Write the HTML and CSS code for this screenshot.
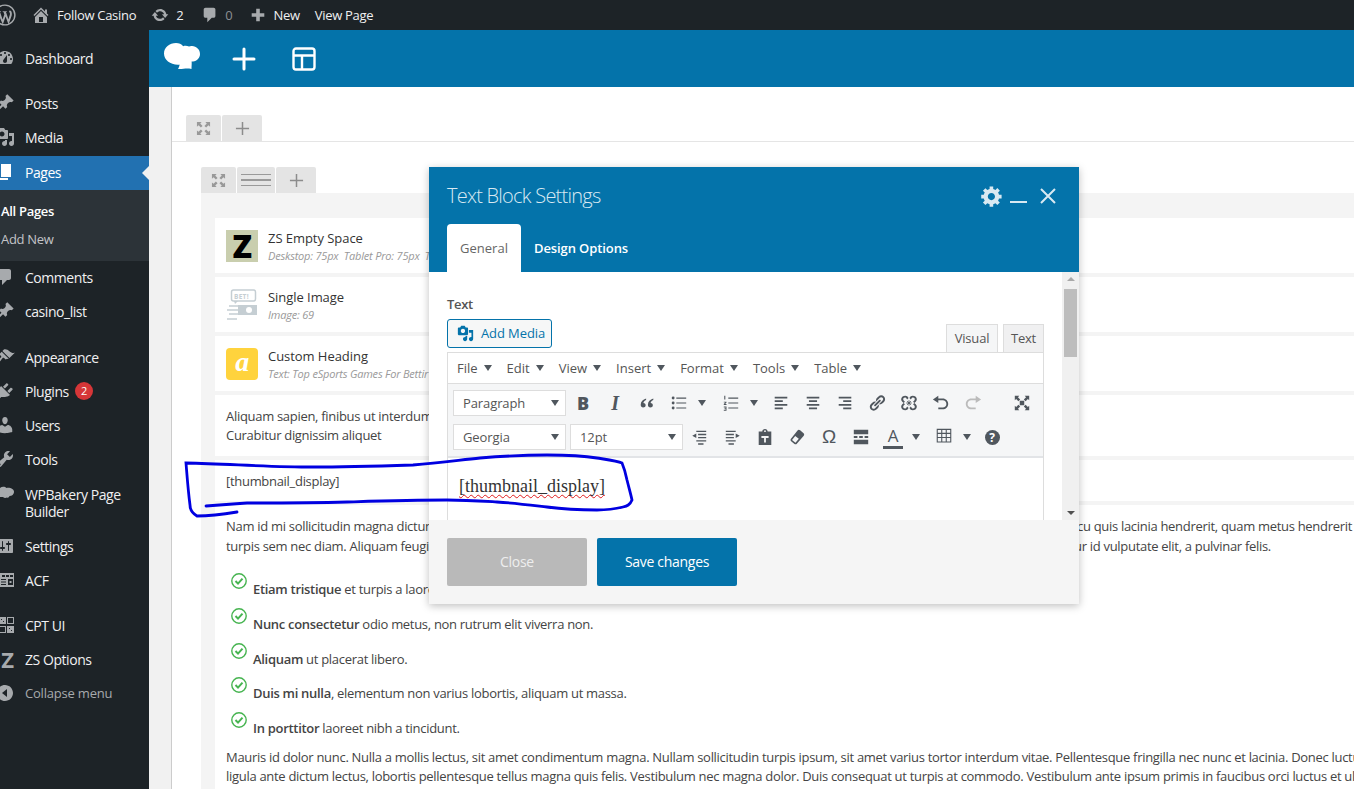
FILE: index.html
```html
<!DOCTYPE html>
<html>
<head>
  <title>Edit Page - Follow Casino</title>
  <link rel="stylesheet" href="styles.css">
</head>
<body>
  <!-- admin bar -->
  <div class="adminbar">
    <svg class="ab-wp" viewBox="0 0 20 20"><circle cx="10" cy="10" r="9" fill="none" stroke="#a7aaad" stroke-width="1.3"/><path d="M2.800 6.500h3.600v.6l-.9.2 2.300 6.700 1.600-4.500-.8-2.200-.8-.2v-.6h4v.6l-.9.2 2.200 6.500 1.300-4c.4-1.400-.2-2-.6-2.800-.2-.6.2-1.200.9-1.200l1 .9c.8 1.700.6 3.300 0 5l-2.500 7-2.700-7.400-2.500 7.400z" fill="#a7aaad"/></svg>
    <svg class="ab-icon home" viewBox="0 0 20 20"><path d="M16 8.5l1.53 1.53-1.06 1.06L10 4.62l-6.47 6.47-1.06-1.06L10 2.5l4 4v-2h2v4zm-6-2.46l6 5.99V18H4v-5.97zM12 17v-5H8v5h4z"/></svg>
    <span class="ab-text site">Follow Casino</span>
    <svg class="ab-icon updates" viewBox="0 0 20 20"><path d="M10.2 3.28c3.53 0 6.43 2.61 6.92 6h2.08l-3.5 4-3.5-4h2.32c-.45-1.97-2.21-3.45-4.32-3.45-1.45 0-2.73.71-3.54 1.78L4.95 5.66C6.23 4.2 8.11 3.28 10.2 3.28zm-.4 13.44c-3.52 0-6.43-2.61-6.92-6H.8l3.5-4c1.17 1.33 2.33 2.67 3.5 4H5.48c.45 1.97 2.21 3.45 4.32 3.45 1.45 0 2.73-.71 3.54-1.78l1.71 1.95c-1.28 1.46-3.15 2.38-5.25 2.38z"/></svg>
    <span class="ab-text count">2</span>
    <svg class="ab-icon bubble" viewBox="0 0 20 20"><path d="M5 2h9c1.1 0 2 .9 2 2v7c0 1.1-.9 2-2 2h-2l-5 5v-5H5c-1.1 0-2-.9-2-2V4c0-1.1.9-2 2-2z"/></svg>
    <span class="ab-text zero">0</span>
    <svg class="ab-icon plus" viewBox="0 0 20 20"><path d="M8 3h4v5h5v4h-5v5H8v-5H3V8h5z"/></svg>
    <span class="ab-text new">New</span>
    <span class="ab-text view">View Page</span>
  </div>

  <div class="layout">
    <!-- left menu -->
    <nav class="sidebar">
      <a class="item first"><svg viewBox="0 0 20 20"><path d="M3.76 16h12.48c1.1-1.37 1.76-3.11 1.76-5 0-4.42-3.58-8-8-8s-8 3.58-8 8c0 1.89.66 3.63 1.76 5zM10 4c.55 0 1 .45 1 1s-.45 1-1 1-1-.45-1-1 .45-1 1-1zM6 6c.55 0 1 .45 1 1s-.45 1-1 1-1-.45-1-1 .45-1 1-1zm8 0c.55 0 1 .45 1 1s-.45 1-1 1-1-.45-1-1 .45-1 1-1zm-5.37 5.55L12 7v6c0 1.1-.9 2-2 2s-2-.9-2-2c0-.57.24-1.08.63-1.45zM4 10c.55 0 1 .45 1 1s-.45 1-1 1-1-.45-1-1 .45-1 1-1zm12 0c.55 0 1 .45 1 1s-.45 1-1 1-1-.45-1-1 .45-1 1-1z"/></svg>Dashboard</a>
      <a class="item sep"><svg viewBox="0 0 20 20"><path d="M10.44 3.02l1.82-1.82 6.36 6.35-1.83 1.82c-1.05-.68-2.48-.57-3.41.36l-.75.75c-.92.93-1.04 2.35-.35 3.41l-1.83 1.82-2.41-2.41-2.8 2.79c-.42.42-3.38 2.71-3.8 2.29s1.86-3.39 2.28-3.81l2.79-2.79L4.1 9.36l1.83-1.82c1.05.69 2.48.57 3.4-.36l.75-.75c.93-.92 1.05-2.35.36-3.41z"/></svg>Posts</a>
      <a class="item"><svg viewBox="0 0 20 20"><path d="M13 11V4c0-.55-.45-1-1-1h-1.67L9 1H5L3.67 3H2c-.55 0-1 .45-1 1v7c0 .55.45 1 1 1h10c.55 0 1-.45 1-1zM7 4.5c1.38 0 2.5 1.12 2.5 2.5S8.38 9.5 7 9.5 4.5 8.38 4.5 7 5.62 4.5 7 4.5zM14 6h5v10.5c0 1.38-1.12 2.5-2.5 2.5S14 17.88 14 16.5s1.12-2.5 2.5-2.5c.17 0 .34.02.5.05V9h-3V6zm-4 8.05V13h2v3.5c0 1.38-1.12 2.5-2.5 2.5S7 17.88 7 16.5 8.12 14 9.5 14c.17 0 .34.02.5.05z"/></svg>Media</a>
      <a class="item current"><svg viewBox="0 0 20 20"><path d="M6 15V2h10v13H6zm-1 1h8v2H3V5h2v11z"/></svg>Pages</a>
      <div class="submenu">
        <a class="sub-on">All Pages</a>
        <a>Add New</a>
      </div>
      <a class="item"><svg viewBox="0 0 20 20"><path d="M5 2h9c1.1 0 2 .9 2 2v7c0 1.1-.9 2-2 2h-2l-5 5v-5H5c-1.1 0-2-.9-2-2V4c0-1.1.9-2 2-2z"/></svg>Comments</a>
      <a class="item"><svg viewBox="0 0 20 20"><path d="M10.44 3.02l1.82-1.82 6.36 6.35-1.83 1.82c-1.05-.68-2.48-.57-3.41.36l-.75.75c-.92.93-1.04 2.35-.35 3.41l-1.83 1.82-2.41-2.41-2.8 2.79c-.42.42-3.38 2.71-3.8 2.29s1.86-3.39 2.28-3.81l2.79-2.79L4.1 9.36l1.83-1.82c1.05.69 2.48.57 3.4-.36l.75-.75c.93-.92 1.05-2.35.36-3.41z"/></svg>casino_list</a>
      <a class="item sep2"><svg viewBox="0 0 20 20"><path d="M14.48 11.06L7.41 3.99l1.5-1.5c.5-.56 2.3-.47 3.51.32 1.21.8 1.43 1.28 2.91 2.1 1.18.64 2.45 1.26 4.45.85zm-.71.71L6.7 4.7 4.93 6.47c-.39.39-.39 1.02 0 1.41l1.06 1.06c.39.39.39 1.03 0 1.42-.6.6-1.43 1.11-2.21 1.69-.35.26-.7.53-1.01.84C1.43 13.23.4 14.68 1.37 15.65c.97.97 2.42-.06 3.76-1.4.31-.31.58-.66.84-1.01.58-.78 1.09-1.61 1.69-2.21.39-.39 1.03-.39 1.42 0l1.06 1.06c.39.39 1.02.39 1.41 0z"/></svg>Appearance</a>
      <a class="item"><svg viewBox="0 0 20 20"><path d="M13.11 4.36L9.87 7.6 8 5.73l3.24-3.24c.35-.34 1.05-.2 1.56.32.52.51.66 1.21.31 1.55zm-8 1.77l.91-1.12 9.01 9.01-1.19.84c-.71.71-2.63 1.16-3.82 1.16H6.14L4.9 17.26c-.59.59-1.54.59-2.12 0-.59-.58-.59-1.53 0-2.12l1.24-1.24v-3.88c0-1.13.4-3.19 1.09-3.89zm7.26 3.97l3.24-3.24c.34-.35 1.04-.21 1.55.31.52.51.66 1.21.31 1.55l-3.24 3.25z"/></svg>Plugins<span class="badge">2</span></a>
      <a class="item"><svg viewBox="0 0 20 20"><path d="M10 9.25c-2.27 0-2.73-3.44-2.73-3.44C7 4.02 7.82 2 9.97 2c2.16 0 2.98 2.02 2.71 3.81 0 0-.41 3.44-2.68 3.44zm0 2.57L12.72 10c2.39 0 4.52 2.33 4.52 4.53v2.49s-3.65 1.13-7.24 1.13c-3.65 0-7.24-1.13-7.24-1.13v-2.49c0-2.25 1.94-4.48 4.47-4.48z"/></svg>Users</a>
      <a class="item"><svg viewBox="0 0 20 20"><path d="M16.68 9.77c-1.34 1.34-3.3 1.67-4.95.99l-5.41 6.52c-.99.99-2.59.99-3.58 0s-.99-2.59 0-3.57l6.52-5.42c-.68-1.65-.35-3.61.99-4.95 1.28-1.28 3.12-1.62 4.72-1.06l-2.89 2.89 2.82 2.82 2.86-2.87c.53 1.58.18 3.39-1.08 4.65zM3.81 16.21c.4.39 1.04.39 1.43 0 .4-.4.4-1.04 0-1.43-.39-.4-1.03-.4-1.43 0-.39.39-.39 1.03 0 1.43z"/></svg>Tools</a>
      <a class="item tall"><svg viewBox="0 0 20 20"><path d="M5 4c2-1.6 5-1.4 6.5 0 2.5-.8 7 .2 7.5 3.5.3 2.5-2 4.5-4.5 4.5-.5 1.5-1.5 2-2.5 1.5-1.5.7-3 .5-4-.5C4 13.5 1 11.500 1 8.500 1 6.500 3 4.500 5 4z"/></svg><span>WPBakery Page Builder</span></a>
      <a class="item"><svg viewBox="0 0 20 20"><path d="M18 16V4c0-.55-.45-1-1-1H3c-.55 0-1 .45-1 1v12c0 .55.45 1 1 1h14c.55 0 1-.45 1-1zM8 11h1c.55 0 1 .45 1 1s-.45 1-1 1H8v1.5c0 .28-.22.5-.5.5s-.5-.22-.5-.5V13H6c-.55 0-1-.45-1-1s.45-1 1-1h1V5.5c0-.28.22-.5.5-.5s.5.22.5.5V11zm5-2h-1c-.55 0-1-.45-1-1s.45-1 1-1h1V5.5c0-.28.22-.5.5-.5s.5.22.5.5V7h1c.55 0 1 .45 1 1s-.45 1-1 1h-1v5.5c0 .28-.22.5-.5.5s-.5-.22-.5-.5V9z"/></svg>Settings</a>
      <a class="item"><svg viewBox="0 0 20 20"><path fill-rule="evenodd" d="M2 3h17v14H2zM7 5v2h3V5zm4 0v2h3V5zm4 0v2h3V5zM6 9v1h5V9zm0 2.5v1h5v-1zM6 14v1h5v-1zm7-5v6h5V9zm1.5 2h2v2h-2z"/></svg>ACF</a>
      <a class="item sep"><svg viewBox="0 0 20 20"><path fill-rule="evenodd" d="M4 2h7v7H4zm2 2v1h1V4zm2 2v1h1V6zM12 2h7v7h-7zm1 1v5h5V3zM4 11h7v7H4zm1 1v5h5v-5zM12 11h7v7h-7zm2 2v1h1v-1zm2 2v1h1v-1z"/></svg>CPT UI</a>
      <a class="item"><span class="zs-mark">Z</span>ZS Options</a>
      <a class="item collapse"><svg viewBox="0 0 20 20"><path d="M10 2c4.42 0 8 3.58 8 8s-3.58 8-8 8-8-3.58-8-8 3.58-8 8-8zm2 12V6l-5 4z"/></svg>Collapse menu</a>
    </nav>

    <main class="main">
      <div class="builder-bar">
        <svg class="bb-logo" viewBox="0 0 36 27"><path d="M12 0c3 0 5.5 1.2 7.2 3.2C21 2.500 23 2.600 25 3.600c.8-.6 1.800-.7 3-.6 4.500.3 8 3.400 8 8 0 4-3 7-7 7.500-.5 0-1-.1-1.400-.1.3 1.800-.1 5.300-.1 7.600-3-.6-5-.6-8-.2-2 .3-4.500.4-5.500.2.800-1.300 1.500-3 1.500-4.500-.3 0-.7.300-1.500.300C6 21.500 0 17 0 10.500 0 4.500 5.500 0 12 0z"/></svg>
        <svg class="bb-icon" viewBox="0 0 24 24"><path d="M12 2v20M2 12h20" fill="none" stroke="#fff" stroke-width="3" stroke-linecap="round"/></svg>
        <svg class="bb-icon" viewBox="0 0 24 24"><path d="M4 1.5h16A2.500 2.500 0 0 1 22.500 4v16a2.500 2.500 0 0 1-2.500 2.500H4A2.500 2.500 0 0 1 1.500 20V4A2.500 2.500 0 0 1 4 1.500zM2 8.500h20M10 8.500V22" fill="none" stroke="#fff" stroke-width="2.4"/></svg>
      </div>
      <div class="content">
        <div class="gutter"></div>
        <div class="canvas">
          <div class="controls row-controls">
            <span class="ctl wide"><svg viewBox="0 0 16 16"><path d="M1 1h5L4.5 2.700 7 5.200 5.200 7 2.700 4.500 1 6zM15 1v5l-1.700-1.500L10.800 7 9 5.200l2.500-2.500L10 1zM1 15v-5l1.700 1.500L5.200 9 7 10.800l-2.500 2.500L6 15zM15 15h-5l1.500-1.700L9 10.800 10.800 9l2.500 2.500L15 10z"/></svg></span>
            <span class="ctl plus"><svg viewBox="0 0 16 16"><path d="M8 1v14M1 8h14" stroke="#8c8c8c" stroke-width="1.6" fill="none"/></svg></span>
          </div>
          <div class="column">
            <div class="controls col-controls">
              <span class="ctl wide"><svg viewBox="0 0 16 16"><path d="M1 1h5L4.5 2.700 7 5.200 5.200 7 2.700 4.500 1 6zM15 1v5l-1.700-1.500L10.800 7 9 5.200l2.500-2.500L10 1zM1 15v-5l1.700 1.500L5.200 9 7 10.800l-2.500 2.500L6 15zM15 15h-5l1.500-1.700L9 10.800 10.800 9l2.500 2.500L15 10z"/></svg></span>
              <span class="ctl lines"><i></i><i></i><i></i></span>
              <span class="ctl plus"><svg viewBox="0 0 16 16"><path d="M8 1v14M1 8h14" stroke="#8c8c8c" stroke-width="1.6" fill="none"/></svg></span>
            </div>
            <div class="band">
              <div class="card element">
                <span class="el-icon zs">Z</span>
                <div><div class="el-title">ZS Empty Space</div><div class="el-sub">Deskstop: 75px&nbsp; Tablet Pro: 75px&nbsp; T</div></div>
              </div>
              <div class="card element">
                <svg class="el-icon" viewBox="0 0 32 32"><rect x="5.5" y="1" width="24" height="11" rx="2" fill="none" stroke="#c5ced3" stroke-width="1.5"/><text x="8" y="10" class="bet">BET!</text><path d="M8 12l1 3 3-3z" fill="#c5ced3"/><path d="M3 17h10M1 21h11M3 25h9M1 30h10" stroke="#c5ced3" stroke-width="1.5"/><path d="M12 16h19v10H12z" fill="#c5ced3"/><circle cx="23" cy="21" r="3" fill="#fff"/></svg>
                <div><div class="el-title">Single Image</div><div class="el-sub">Image: 69</div></div>
              </div>
              <div class="card element">
                <span class="el-icon heading">a</span>
                <div><div class="el-title">Custom Heading</div><div class="el-sub">Text: Top eSports Games For Bettir</div></div>
              </div>
              <div class="card text-card aliquam">
                <p>Aliquam sapien, finibus ut interdum<br>Curabitur dignissim aliquet</p>
              </div>
              <div class="card text-card shortcode">
                <p>[thumbnail_display]</p>
              </div>
              <div class="card text-card body-text">
                <p class="spread"><span>Nam id mi sollicitudin magna dictum</span><span>arcu quis lacinia hendrerit, quam metus hendrerit</span></p>
                <p class="spread short"><span>turpis sem nec diam. Aliquam feugiat</span><span>ur id vulputate elit, a pulvinar felis.</span></p>
                <ul class="checks">
                  <li><svg viewBox="0 0 16 16"><circle cx="8" cy="8" r="7.2"/><path d="M4.5 8l2.5 2.600 4.500-5"/></svg><span><b>Etiam tristique</b> et turpis a laoreet.</span></li>
                  <li><svg viewBox="0 0 16 16"><circle cx="8" cy="8" r="7.2"/><path d="M4.5 8l2.5 2.600 4.500-5"/></svg><span><b>Nunc consectetur</b> odio metus, non rutrum elit viverra non.</span></li>
                  <li><svg viewBox="0 0 16 16"><circle cx="8" cy="8" r="7.2"/><path d="M4.5 8l2.5 2.600 4.500-5"/></svg><span><b>Aliquam</b> ut placerat libero.</span></li>
                  <li><svg viewBox="0 0 16 16"><circle cx="8" cy="8" r="7.2"/><path d="M4.5 8l2.5 2.600 4.500-5"/></svg><span><b>Duis mi nulla</b>, elementum non varius lobortis, aliquam ut massa.</span></li>
                  <li><svg viewBox="0 0 16 16"><circle cx="8" cy="8" r="7.2"/><path d="M4.5 8l2.5 2.600 4.500-5"/></svg><span><b>In porttitor</b> laoreet nibh a tincidunt.</span></li>
                </ul>
                <p class="long">Mauris id dolor nunc. Nulla a mollis lectus, sit amet condimentum magna. Nullam sollicitudin turpis ipsum, sit amet varius tortor interdum vitae. Pellentesque fringilla nec nunc et lacinia. Donec luctus</p>
                <p class="long">ligula ante dictum lectus, lobortis pellentesque tellus magna quis felis. Vestibulum nec magna dolor. Duis consequat ut turpis at commodo. Vestibulum ante ipsum primis in faucibus orci luctus et ultrices</p>
              </div>
            </div>
          </div>
        </div>
      </div>
    </main>
  </div>

  <!-- settings dialog -->
  <div class="modal">
    <div class="modal-head">
      <div class="modal-title">
        <h2>Text Block Settings</h2>
        <svg class="gear" viewBox="0 0 20 20"><path d="M18 12h-2.180c-.17.7-.44 1.350-.81 1.930l1.540 1.540-2.100 2.100-1.540-1.540c-.58.36-1.230.63-1.910.79V19H8v-2.180c-.68-.16-1.330-.43-1.910-.79l-1.540 1.540-2.120-2.120 1.540-1.540c-.36-.58-.63-1.230-.79-1.910H1V9.030h2.170c.16-.7.44-1.350.8-1.940L2.430 5.550l2.100-2.100 1.540 1.540c.58-.37 1.240-.64 1.930-.81V2h3v2.180c.68.16 1.330.43 1.910.79l1.540-1.540 2.120 2.120-1.540 1.540c.36.59.64 1.240.8 1.940H18V12zm-8.500 1.500c1.660 0 3-1.340 3-3s-1.340-3-3-3-3 1.340-3 3 1.340 3 3 3z"/></svg>
        <span class="minimize"></span>
        <svg class="close-x" viewBox="0 0 16 16"><path d="M1 1l14 14M15 1L1 15" stroke="#d9e9f2" stroke-width="2" fill="none"/></svg>
      </div>
      <div class="modal-tabs">
        <span class="mtab active">General</span>
        <span class="mtab">Design Options</span>
      </div>
    </div>
    <div class="modal-body">
      <div class="modal-scroll">
        <div class="field-label">Text</div>
        <div class="media-row">
          <span class="add-media"><svg viewBox="0 0 20 20"><path d="M13 11V4c0-.55-.45-1-1-1h-1.670L9 1H5L3.670 3H2c-.55 0-1 .45-1 1v7c0 .55.45 1 1 1h10c.55 0 1-.45 1-1zM7 4.500c1.380 0 2.500 1.120 2.500 2.500S8.380 9.500 7 9.500 4.500 8.380 4.500 7 5.620 4.500 7 4.500zM14 6h5v10.500c0 1.380-1.120 2.500-2.500 2.500S14 17.880 14 16.500s1.120-2.500 2.500-2.500c.17 0 .34.02.5.05V9h-3V6zm-4 8.050V13h2v3.500c0 1.380-1.120 2.500-2.500 2.500S7 17.880 7 16.500 8.120 14 9.500 14c.17 0 .34.02.5.05z"/></svg>Add Media</span>
          <div class="editor-tabs">
            <span class="etab on">Visual</span>
            <span class="etab">Text</span>
          </div>
        </div>
        <div class="editor">
          <div class="menubar">
            <span>File<i class="caret"></i></span>
            <span>Edit<i class="caret"></i></span>
            <span>View<i class="caret"></i></span>
            <span>Insert<i class="caret"></i></span>
            <span>Format<i class="caret"></i></span>
            <span>Tools<i class="caret"></i></span>
            <span>Table<i class="caret"></i></span>
          </div>
          <div class="toolbar">
            <div class="tool-row">
              <span class="pick">Paragraph<i class="caret"></i></span>
              <span class="btn letter bold">B</span>
              <span class="btn letter ital">I</span>
              <span class="btn"><svg viewBox="0 0 20 20"><path d="M9 5C5.500 6 3 8.500 3 12c0 2 1.200 3 2.700 3S8.500 14 8.500 12.500 7.200 10 6 10c.3-1.200 1.400-2.400 3-3.200zM17 5c-3.500 1-6 3.500-6 7 0 2 1.200 3 2.700 3s2.800-1 2.800-2.500S15.200 10 14 10c.3-1.200 1.400-2.400 3-3.200z"/></svg></span>
              <span class="btn"><svg viewBox="0 0 20 20"><circle cx="3.5" cy="4.5" r="1.6"/><circle cx="3.5" cy="10" r="1.6"/><circle cx="3.5" cy="15.5" r="1.6"/><path d="M7 4h11v1.200H7zM7 9.400h11v1.200H7zM7 14.900h11v1.200H7z"/></svg></span>
              <span class="arrow first-arrow"><i class="caret"></i></span>
              <span class="btn"><svg viewBox="0 0 20 20"><path d="M2.500 2h1.200v4H2.500zM2 8.500h3v1L3.500 11.200H5v1H2v-1l1.700-1.800H2zM2 14h3v4.500H2v-1h2v-.8H2.800v-.9H4v-.8H2zM7 4h11v1.200H7zM7 9.400h11v1.200H7zM7 14.900h11v1.200H7z"/></svg></span>
              <span class="arrow"><i class="caret"></i></span>
              <span class="btn"><svg viewBox="0 0 20 20"><path d="M3 3h14v2H3zM3 7h9v2H3zM3 11h14v2H3zM3 15h9v2H3z"/></svg></span>
              <span class="btn"><svg viewBox="0 0 20 20"><path d="M3 3h14v2H3zM5.500 7h9v2h-9zM3 11h14v2H3zM5.500 15h9v2h-9z"/></svg></span>
              <span class="btn"><svg viewBox="0 0 20 20"><path d="M3 3h14v2H3zM8 7h9v2H8zM3 11h14v2H3zM8 15h9v2H8z"/></svg></span>
              <span class="btn"><svg viewBox="0 0 20 20"><path d="M17.740 2.760c1.680 1.690 1.680 4.410 0 6.100l-1.530 1.520c-1.120 1.120-2.700 1.470-4.140 1.090l2.620-2.610.76-.77.76-.76c.84-.84.84-2.200 0-3.040-.84-.85-2.200-.85-3.040 0l-.77.76-3.380 3.380c-.37-1.440-.02-3.020 1.100-4.140l1.520-1.530c1.690-1.680 4.420-1.680 6.100 0zM8.590 13.430l5.340-5.340c.42-.42.42-1.100 0-1.520-.44-.43-1.130-.39-1.530 0l-5.330 5.340c-.42.42-.42 1.100 0 1.520.44.43 1.130.39 1.520 0zm-.76 2.290l4.140-4.150c.38 1.440.03 3.020-1.090 4.140l-1.520 1.530c-1.690 1.680-4.410 1.680-6.100 0-1.680-1.680-1.680-4.420 0-6.100l1.530-1.520c1.120-1.120 2.700-1.470 4.140-1.100l-4.140 4.150c-.85.84-.85 2.200 0 3.050.84.84 2.200.84 3.040 0z"/></svg></span>
              <span class="btn"><svg viewBox="0 0 20 20"><path d="M6 2c1.500 0 2.700 1 3.500 2.500L8 6 6.800 4.500c-.8-.8-2-.7-2.700 0s-.7 1.900 0 2.700L5.500 8.500 4 10 2.500 8.500C.8 6.800 1 4.500 2.500 3 3.500 2.300 4.700 2 6 2zM14 2c-1.500 0-2.700 1-3.500 2.500L12 6l1.200-1.500c.8-.8 2-.7 2.700 0s.7 1.900 0 2.700l-1.400 1.300L16 10l1.500-1.500c1.700-1.700 1.500-4 0-5.500-1-.7-2.200-1-3.500-1zM6 18c1.500 0 2.700-1 3.500-2.500L8 14l-1.200 1.500c-.8.8-2 .7-2.700 0s-.7-1.900 0-2.700l1.400-1.300L4 10l-1.500 1.500c-1.700 1.700-1.500 4 0 5.500 1 .7 2.200 1 3.500 1zM14 18c-1.500 0-2.700-1-3.500-2.500L12 14l1.200 1.500c.8.8 2 .7 2.700 0s.7-1.900 0-2.700l-1.400-1.300L16 10l1.500 1.500c1.700 1.700 1.500 4 0 5.500-1 .7-2.200 1-3.500 1z"/><path d="M7 10h6M10 7v6M8 8l4 4M12 8l-4 4" stroke="#50575e" fill="none"/></svg></span>
              <span class="btn"><svg viewBox="0 0 20 20"><path d="M12 5H7V2L1 6l6 4V7h5c2.200 0 4 1.800 4 4s-1.800 4-4 4H7v2h5c3.310 0 6-2.690 6-6s-2.690-6-6-6z"/></svg></span>
              <span class="btn off"><svg viewBox="0 0 20 20"><path d="M8 5h5V2l6 4-6 4V7H8c-2.200 0-4 1.800-4 4s1.800 4 4 4h5v2H8c-3.310 0-6-2.690-6-6s2.690-6 6-6z"/></svg></span>
              <span class="btn push"><svg viewBox="0 0 20 20"><path d="M2 2h5L5.500 3.500 8 6 6 8 3.500 5.500 2 7zM18 2v5l-1.500-1.500L14 8l-2-2 2.500-2.500L13 2zM2 18v-5l1.500 1.500L6 12l2 2-2.500 2.500L7 18zM18 18h-5l1.500-1.500L12 14l2-2 2.500 2.500L18 13zM7.500 7.500h5v5h-5z"/></svg></span>
            </div>
            <div class="tool-row">
              <span class="pick">Georgia<i class="caret"></i></span>
              <span class="pick">12pt<i class="caret"></i></span>
              <span class="btn"><svg viewBox="0 0 20 20"><path d="M7 3h11v1.500H7zM9 6.500h9V8H9zM9 10h9v1.500H9zM7 13.500h11V15H7zM9 17h6v1.500H9zM7 6v5L2.500 8.500z"/></svg></span>
              <span class="btn"><svg viewBox="0 0 20 20"><path d="M2 3h11v1.500H2zM2 6.500h9V8H2zM2 10h9v1.500H2zM2 13.500h11V15H2zM5 17h6v1.500H5zM13 6v5l4.500-2.500z"/></svg></span>
              <span class="btn"><svg viewBox="0 0 20 20"><path fill-rule="evenodd" d="M3 4h4c0-1.500 1.300-3 3-3s3 1.500 3 3h4v15H3zM9 3.500a1 1 0 1 0 2 0 1 1 0 0 0-2 0zM6 9v2h3v5h2v-5h3V9z"/></svg></span>
              <span class="btn"><svg viewBox="0 0 20 20"><path fill-rule="evenodd" d="M12 2c.5 0 1 .2 1.500.6l3.800 3.300c.8.700.9 1.900.2 2.700L9.800 17.500c-.6.700-1.800.8-2.600.2L3.500 14.600c-.8-.7-.9-1.900-.2-2.700l7.300-9.200c.3-.5.900-.7 1.400-.7zM8 9l-3.500 4.200 3.800 3.200L12 12z"/></svg></span>
              <span class="btn letter omega">Ω</span>
              <span class="btn"><svg viewBox="0 0 20 20"><path d="M2 2h16v5H2zM2 9h4v2H2zM8 9h4v2H8zM14 9h4v2h-4zM2 13h16v5H2z"/></svg></span>
              <span class="btn color"><span class="letter-a">A</span></span>
              <span class="arrow wide-arrow"><i class="caret"></i></span>
              <span class="btn"><svg viewBox="0 0 20 20"><path d="M2.500 1.500h15v14h-15zM2.500 6h15M2.500 10.500h15M7.500 1.500v14M12.500 1.500v14" fill="none" stroke="#50575e" stroke-width="1.2"/></svg></span>
              <span class="arrow narrow"><i class="caret"></i></span>
              <span class="btn"><span class="help">?</span></span>
            </div>
          </div>
          <div class="edit-area"><span class="misspelled">[thumbnail_display]</span></div>
        </div>
      </div>
      <div class="scrollbar">
        <i class="sb-up"></i>
        <span class="sb-thumb"></span>
        <i class="sb-down"></i>
      </div>
    </div>
    <div class="modal-foot">
      <span class="fbtn close">Close</span>
      <span class="fbtn save">Save changes</span>
    </div>
  </div>

  <!-- hand drawn marker on top of the screenshot -->
  <svg class="scribble" viewBox="0 0 1354 789">
    <path d="M237 512C225 514 205 516 197 516C192 513 190 510 190 505C188 490 187 475 186 463C230 464 270 467 313 467C345 467 380 466 413 465C440 463 460 460 480 458C505 456 525 455 547 455C570 455 585 456 597 458C610 460 618 461 622 463C625 470 626 475 627 480C629 488 631 495 632 500C630 505 627 506 623 507C615 509 605 510 597 510C578 510 562 509 547 507C530 505 515 503 497 502C480 501 465 500 447 500C410 500 380 501 347 502C310 503 280 503 247 503C233 504 218 505 206 506"/>
  </svg>
</body>
</html>
```

FILE: styles.css
```css
html, body {
  height: 100%;
  overflow: hidden;
}

body {
  margin: 0;
  font-family: "Open Sans", "Noto Sans", sans-serif;
  font-size: 13px;
  letter-spacing: -0.3px;
  color: #444;
  background: #f1f1f1;
}

/* admin bar */
.adminbar {
  display: flex;
  align-items: center;
  height: 30px;
  background: #1d2327;
}

.ab-wp {
  width: 22px;
  height: 22px;
  margin-left: -6px;
  flex: none;
}

.ab-icon {
  width: 18px;
  height: 18px;
  fill: #a7aaad;
  flex: none;
}

.ab-text {
  color: #f0f0f1;
}

.home { margin-left: 15px; width: 20px; height: 20px; }
.site { margin-left: 6px; }
.updates { margin-left: 15px; }
.count { margin-left: 7px; }
.bubble { margin-left: 18px; }
.zero { margin-left: 6px; color: #8c8f94; }
.plus { margin-left: 17px; }
.new { margin-left: 6px; }
.view { margin-left: 15px; }

.layout {
  display: flex;
  height: 759px;
}

/* left menu */
.sidebar {
  width: 149px;
  flex: none;
  background: #1d2327;
  overflow: hidden;
  font-size: 14px;
  letter-spacing: -0.45px;
  color: #f0f0f1;
}

.item {
  display: flex;
  align-items: center;
  height: 34px;
  padding-bottom: 2px;
  box-sizing: border-box;
  position: relative;
}

.item svg {
  width: 20px;
  height: 20px;
  margin-left: -5px;
  margin-right: 10px;
  fill: #a7aaad;
  flex: none;
}

.first { margin-top: 12px; }
.sep { margin-top: 11px; }
.sep2 { margin-top: 12px; }

.current {
  margin-top: 1px;
  background: #2271b1;
  color: #fff;
}

.current svg { fill: #fff; }

.current::after {
  content: "";
  position: absolute;
  right: 0;
  top: 10px;
  border: 7px solid transparent;
  border-right-color: #f1f1f1;
  border-left-width: 0;
}

.submenu {
  background: #2c3338;
  height: 71px;
  padding-top: 7px;
  box-sizing: border-box;
  font-size: 13px;
  letter-spacing: -0.3px;
  color: #c3c4c7;
}

.submenu a {
  display: block;
  height: 28px;
  line-height: 28px;
  padding-left: 1px;
}

.sub-on {
  color: #fff;
  font-weight: 600;
}

.tall {
  height: 53px;
  line-height: 17px;
}

.tall svg { margin-top: -17px; }

.badge {
  width: 18px;
  height: 18px;
  margin-left: 6px;
  border-radius: 50%;
  background: #d63638;
  color: #fff;
  font-size: 11px;
  line-height: 18px;
  text-align: center;
}

.zs-mark {
  width: 15px;
  margin-right: 10px;
  font-size: 22px;
  font-weight: 700;
  color: #a7aaad;
  text-align: center;
}

.collapse {
  color: #a7aaad;
  font-size: 13px;
  letter-spacing: -0.2px;
}

/* builder */
.main {
  flex: 1;
  min-width: 0;
  display: flex;
  flex-direction: column;
}

.builder-bar {
  display: flex;
  align-items: center;
  height: 57px;
  flex: none;
  background: #0473aa;
  padding-left: 15px;
}

.bb-logo {
  width: 36px;
  height: 27px;
  fill: #fff;
  margin-top: -5px;
}

.bb-logo + .bb-icon { margin-left: 32px; }
.bb-icon { width: 24px; height: 24px; }
.bb-icon + .bb-icon { margin-left: 36px; }

.content {
  flex: 1;
  display: flex;
  min-height: 0;
}

.gutter {
  width: 22px;
  flex: none;
  border-right: 1px solid #ccc;
}

.canvas {
  flex: 1;
  min-width: 0;
  overflow: hidden;
  background: #fff;
}

.controls {
  display: flex;
  gap: 1px;
  height: 26px;
}

.row-controls {
  margin: 28px 0 0 14px;
}

.column {
  border-top: 1px solid #e5e5e5;
  padding: 25px 0 0 29px;
}

.ctl {
  display: flex;
  align-items: center;
  justify-content: center;
  background: #e4e4e4;
  border-radius: 2px 2px 0 0;
}

.ctl svg {
  width: 15px;
  height: 15px;
  fill: #999;
}

.ctl.wide { width: 35px; }
.ctl.plus { width: 40px; margin: 0; }
.ctl.lines { width: 38px; flex-direction: column; gap: 4px; }

.ctl.lines i {
  display: block;
  width: 30px;
  height: 1.5px;
  background: #999;
}

.band {
  background: #f4f4f4;
  padding: 25px 0 0 14px;
  display: flex;
  flex-direction: column;
  gap: 4px;
}

.card {
  background: #fff;
  padding-left: 11px;
}

.element {
  display: flex;
  align-items: center;
  gap: 10px;
  height: 55px;
}

.el-icon {
  width: 32px;
  height: 32px;
  flex: none;
  display: block;
  text-align: center;
}

.el-icon.zs {
  background: #c9ceae;
  color: #000;
  font-size: 32px;
  font-weight: 800;
  line-height: 32px;
}

.el-icon.heading {
  background: #ffd33d;
  border-radius: 4px;
  color: #fff;
  font-family: "Liberation Serif", serif;
  font-style: italic;
  font-weight: 700;
  font-size: 28px;
  line-height: 28px;
}

.bet {
  font-size: 6.5px;
  font-weight: 700;
  fill: #c5ced3;
  letter-spacing: 0.3px;
}

.el-title {
  margin-bottom: 1px;
  color: #333;
  line-height: 18px;
  letter-spacing: -0.05px;
}

.el-sub {
  font-size: 11px;
  font-style: italic;
  color: #999;
  line-height: 15px;
  letter-spacing: -0.2px;
}

.text-card p {
  margin: 0;
  white-space: nowrap;
}

.aliquam {
  height: 61px;
  padding-top: 12px;
  box-sizing: border-box;
  line-height: 19px;
}

.shortcode {
  height: 41px;
  padding-top: 12px;
  box-sizing: border-box;
  line-height: 19px;
}

.body-text {
  padding-top: 12px;
  line-height: 19.5px;
  height: 300px;
}

.spread {
  display: flex;
  justify-content: space-between;
  width: 1126px;
}

.spread.short { width: 1045px; }

.checks {
  list-style: none;
  margin: 17px 0 1px;
  padding: 0 0 0 5px;
}

.checks li {
  display: flex;
  height: 34.75px;
}

.checks svg {
  width: 16px;
  height: 16px;
  margin-right: 6px;
  flex: none;
  fill: none;
  stroke: #46b450;
  stroke-width: 1.4;
}

.checks svg path { stroke-width: 2; }

.checks span {
  margin-top: 7px;
}

.checks b { font-weight: 600; }

/* dialog */
.modal {
  position: absolute;
  left: 429px;
  top: 167px;
  width: 650px;
  height: 437px;
  display: flex;
  flex-direction: column;
  background: #fff;
  box-shadow: 0 2px 8px rgba(0, 0, 0, 0.25);
}

.modal-head {
  background: #0473aa;
  height: 105px;
  flex: none;
  padding-left: 18px;
  box-sizing: border-box;
}

.modal-title {
  display: flex;
  align-items: center;
  height: 57px;
}

.modal-title h2 {
  margin: 0 auto 0 0;
  font-size: 20px;
  font-weight: 300;
  letter-spacing: -0.75px;
  color: #d9e9f2;
}

.gear {
  width: 24px;
  height: 24px;
  fill: #d9e9f2;
  margin-right: 6px;
}

.minimize {
  width: 17px;
  height: 2px;
  margin: 12px 13px 0 0;
  background: #d9e9f2;
}

.close-x {
  width: 16px;
  height: 16px;
  margin-right: 23px;
}

.modal-tabs {
  display: flex;
}

.mtab {
  height: 48px;
  line-height: 48px;
  color: #fff;
  font-weight: 600;
  letter-spacing: -0.1px;
  margin-left: 13px;
}

.mtab.active {
  width: 74px;
  margin-left: 0;
  text-align: center;
  background: #fff;
  border-radius: 4px 4px 0 0;
  color: #666;
  font-weight: 400;
  letter-spacing: 0;
}

.modal-body {
  flex: 1;
  display: flex;
  min-height: 0;
  overflow: hidden;
}

.modal-scroll {
  width: 597px;
  margin-left: 18px;
  flex: none;
}

.field-label {
  margin-top: 23px;
  height: 24px;
  line-height: 18px;
  font-weight: 600;
  color: #555;
}

.media-row {
  display: flex;
  align-items: flex-end;
  justify-content: space-between;
  height: 33px;
}

.add-media {
  display: flex;
  align-items: center;
  width: 105px;
  height: 29px;
  margin-bottom: 4px;
  padding-bottom: 1px;
  box-sizing: border-box;
  border: 1px solid #0473aa;
  border-radius: 3px;
  background: #f6f7f7;
  color: #0473aa;
  letter-spacing: -0.1px;
}

.add-media svg {
  width: 17px;
  height: 17px;
  margin: 0 7px 0 9px;
  fill: #0473aa;
}

.editor-tabs {
  display: flex;
  gap: 5px;
}

.etab {
  display: block;
  height: 28px;
  width: 41px;
  box-sizing: border-box;
  border: 1px solid #ddd;
  border-bottom: 0;
  background: #f0f0f1;
  color: #555;
  line-height: 27px;
  text-align: center;
  letter-spacing: -0.2px;
}

.etab.on {
  width: 52px;
  background: #f5f6f7;
}

.editor {
  border: 1px solid #ddd;
}

.menubar {
  display: flex;
  align-items: center;
  height: 30px;
  padding-left: 9px;
  border-bottom: 1px solid #ddd;
  gap: 15px;
  color: #555;
  background: #fff;
  letter-spacing: 0;
}

.menubar span {
  display: flex;
  align-items: center;
}

.caret {
  display: inline-block;
  width: 0;
  height: 0;
  margin-left: 6px;
  border: 4px solid transparent;
  border-top: 6px solid #50575e;
  border-bottom: 0;
}

.toolbar {
  background: #f5f6f7;
  height: 74px;
  padding: 6px 0 0 5px;
  box-sizing: border-box;
  border-bottom: 2px solid #e2e4e7;
}

.tool-row {
  display: flex;
  align-items: center;
  height: 26px;
  margin-bottom: 8px;
}

.pick {
  display: flex;
  align-items: center;
  justify-content: space-between;
  width: 113px;
  height: 26px;
  margin-right: 4px;
  padding: 0 6px 0 9px;
  box-sizing: border-box;
  border: 1px solid #ddd;
  background: #fff;
  color: #555;
  letter-spacing: -0.1px;
}

.pick + .btn { margin-left: -3px; }
.pick + .pick + .btn { margin: 0 2px 0 -4px; }

.btn {
  display: flex;
  align-items: center;
  justify-content: center;
  width: 32px;
  height: 26px;
  flex: none;
  color: #50575e;
}

.btn svg {
  width: 18px;
  height: 18px;
  fill: #50575e;
}

.btn.off svg { fill: #bbb; }
.push { margin-left: auto; margin-right: 5px; }

.letter {
  font-size: 18px;
}

.bold { font-weight: 800; }

.ital {
  font-family: "Liberation Serif", serif;
  font-style: italic;
  font-weight: 700;
  font-size: 20px;
}

.omega { font-family: "Liberation Sans", sans-serif; font-size: 19px; }

.arrow {
  display: flex;
  width: 18px;
  flex: none;
}

.arrow .caret { margin-left: 3px; }
.first-arrow { width: 20px; }
.arrow.wide-arrow { width: 19px; }
.arrow.narrow { width: 16px; }

.letter-a {
  display: block;
  width: 20px;
  font-size: 17px;
  line-height: 20px;
  text-align: center;
  border-bottom: 3px solid #50575e;
}

.help {
  width: 15px;
  height: 15px;
  border-radius: 50%;
  background: #50575e;
  color: #fff;
  font-size: 12px;
  font-weight: 700;
  line-height: 15px;
  text-align: center;
}

.edit-area {
  height: 100px;
  padding: 17px 0 0 11px;
  background: #fff;
  font-family: "Liberation Serif", serif;
  font-size: 18px;
  letter-spacing: 0;
  line-height: 22px;
  color: #333;
}

.misspelled {
  text-decoration: underline wavy #e01b1b 1px;
  text-underline-offset: 2px;
  text-decoration-skip-ink: none;
}

.scrollbar {
  position: relative;
  width: 17px;
  margin-left: auto;
  background: #f0f0f0;
}

.sb-thumb {
  position: absolute;
  left: 2px;
  top: 17px;
  width: 13px;
  height: 68px;
  background: #bdbdbd;
}

.sb-up,
.sb-down {
  position: absolute;
  left: 5px;
  border: 4px solid transparent;
}

.sb-up {
  top: 5px;
  border-top: 0;
  border-bottom: 4px solid #a8a8a8;
}

.sb-down {
  bottom: 5px;
  border-bottom: 0;
  border-top: 4px solid #505050;
}

.modal-foot {
  display: flex;
  gap: 10px;
  height: 84px;
  flex: none;
  padding: 18px 0 0 18px;
  box-sizing: border-box;
  background: #f5f5f5;
}

.fbtn {
  width: 140px;
  height: 48px;
  border-radius: 2px;
  font-size: 14px;
  line-height: 48px;
  text-align: center;
}

.fbtn.close {
  background: #b9b9b9;
  color: #eee;
}

.fbtn.save {
  background: #0473aa;
  color: #fff;
}

.scribble {
  position: absolute;
  left: 0;
  top: 0;
  width: 1354px;
  height: 789px;
  pointer-events: none;
  fill: none;
  stroke: #0000e0;
  stroke-width: 2.8;
  stroke-linecap: round;
}
```
